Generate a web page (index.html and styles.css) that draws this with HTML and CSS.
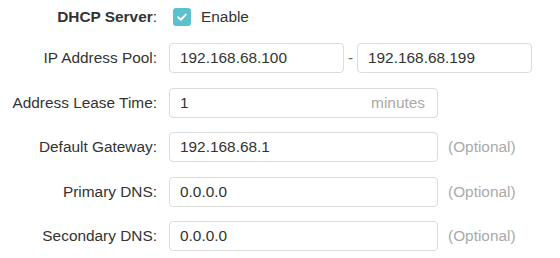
FILE: index.html
```html
<!DOCTYPE html>
<html>
<head>
<meta charset="utf-8">
<link rel="stylesheet" href="styles.css">
</head>
<body>
<form class="form">
  <div class="row row-first">
    <label class="label"><b>DHCP Server</b>:</label>
    <div class="control">
      <span class="checkbox"><svg width="18" height="18" viewBox="0 0 18 18"><path d="M5.2 9.3 L7.8 11.8 L12.8 6.6" fill="none" stroke="#fff" stroke-width="2" stroke-linecap="round" stroke-linejoin="round"/></svg></span>
      <span class="check-text">Enable</span>
    </div>
  </div>
  <div class="row">
    <label class="label">IP Address Pool:</label>
    <div class="control">
      <input class="input input-half" type="text" value="192.168.68.100">
      <span class="dash">-</span>
      <input class="input input-half" type="text" value="192.168.68.199">
    </div>
  </div>
  <div class="row">
    <label class="label">Address Lease Time:</label>
    <div class="control">
      <div class="unit-field">
        <input class="unit-input" type="text" value="1">
        <span class="unit">minutes</span>
      </div>
    </div>
  </div>
  <div class="row">
    <label class="label">Default Gateway:</label>
    <div class="control">
      <input class="input input-full" type="text" value="192.168.68.1">
      <span class="hint">(Optional)</span>
    </div>
  </div>
  <div class="row">
    <label class="label">Primary DNS:</label>
    <div class="control">
      <input class="input input-full" type="text" value="0.0.0.0">
      <span class="hint">(Optional)</span>
    </div>
  </div>
  <div class="row">
    <label class="label">Secondary DNS:</label>
    <div class="control">
      <input class="input input-full" type="text" value="0.0.0.0">
      <span class="hint">(Optional)</span>
    </div>
  </div>
</form>
</body>
</html>
```
FILE: styles.css
```css
html, body {
  margin: 0;
  padding: 0;
  background: #fff;
}
body {
  font-family: "Liberation Sans", Arial, sans-serif;
  font-size: 15.4px;
  color: #333;
}
.form {
  margin: 0;
  padding: 0 0 0 8px;
}
.row {
  display: flex;
  align-items: center;
  height: 30px;
  margin-bottom: 14.5px;
}
.row-first {
  height: 18px;
  margin-top: 8px;
  margin-bottom: 17px;
}
.label {
  width: 149px;
  margin-right: 12px;
  text-align: right;
  flex: none;
  color: #333;
}
.label b {
  font-weight: bold;
}
.control {
  display: flex;
  align-items: center;
}
.checkbox {
  width: 18px;
  height: 18px;
  border-radius: 3px;
  background: #5ac2ce;
  margin-left: 4px;
  display: block;
}
.checkbox svg {
  display: block;
}
.check-text {
  margin-left: 10px;
}
.input {
  box-sizing: border-box;
  height: 30px;
  border: 1px solid #dcdcdc;
  border-radius: 4px;
  padding: 0 10px;
  font-family: "Liberation Sans", Arial, sans-serif;
  font-size: 15.4px;
  color: #333;
  background: #fff;
  outline: none;
  margin: 0;
}
.input-half {
  width: 175px;
}
.input-full {
  width: 269px;
}
.dash {
  width: 13px;
  text-align: center;
  color: #666;
}
.unit-field {
  box-sizing: border-box;
  width: 269px;
  height: 30px;
  border: 1px solid #dcdcdc;
  border-radius: 4px;
  display: flex;
  align-items: center;
  padding: 0 12px 0 10px;
}
.unit-input {
  flex: 1;
  min-width: 0;
  border: none;
  outline: none;
  padding: 0;
  margin: 0;
  font-family: "Liberation Sans", Arial, sans-serif;
  font-size: 15.4px;
  color: #333;
  background: transparent;
}
.unit {
  color: #aaa;
}
.hint {
  margin-left: 10px;
  color: #aaa;
}
```
